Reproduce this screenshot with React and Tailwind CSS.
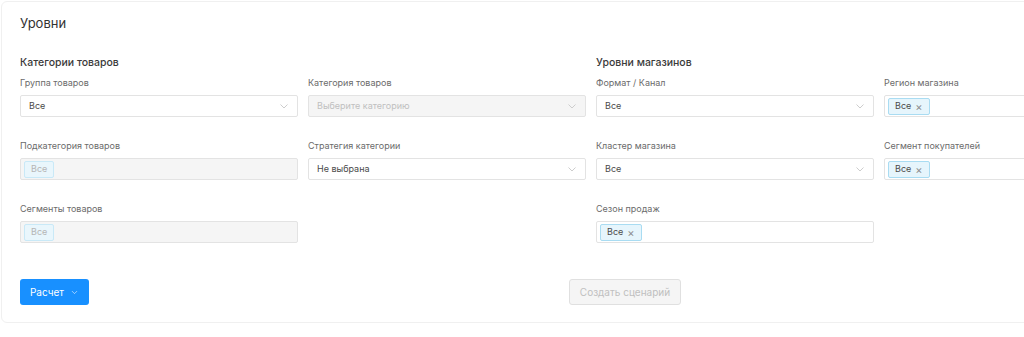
import { ChevronDown } from 'lucide-react'

const Chevron = ({ className = '' }) => (
  <svg width="8" height="5" viewBox="0 0 8 5" className={className} fill="none">
    <path d="M0.5 0.5 L4 4 L7.5 0.5" stroke="currentColor" strokeWidth="1" />
  </svg>
)

function Select({ value, placeholder, disabled }) {
  return (
    <div
      className={`h-[22px] flex items-center justify-between pl-[8px] pr-[9px] border rounded-[2px] ${
        disabled ? 'bg-[#f5f5f5] border-[#e3e3e3]' : 'bg-white border-[#e3e3e3]'
      }`}
    >
      <span className={`text-[9px] ${value ? 'text-[#4a4a4a]' : 'text-[#c0c0c0]'}`}>
        {value || placeholder}
      </span>
      <Chevron className="text-[#cdcdcd]" />
    </div>
  )
}

function Tags({ disabled }) {
  return (
    <div
      className={`h-[22px] flex items-center pl-[3px] border rounded-[2px] ${
        disabled ? 'bg-[#f5f5f5] border-[#e3e3e3]' : 'bg-white border-[#e3e3e3]'
      }`}
    >
      <span
        className={`h-[17px] flex items-center gap-[4px] px-[6px] rounded-[2px] border text-[9px] ${
          disabled
            ? 'bg-[#e9f6fc] border-[#c9e9f7] text-[#b5b5b5]'
            : 'bg-[#e6f5fc] border-[#a9dcf2] text-[#4a4a4a]'
        }`}
      >
        Все
        {!disabled && <span className="text-[#8c8c8c] text-[11px] leading-none mt-[2px]">×</span>}
      </span>
    </div>
  )
}

function Field({ label, children }) {
  return (
    <div className="flex flex-col">
      <div className="text-[9px] leading-[16px] text-[#6b6b6b] mb-[4px]">{label}</div>
      {children}
    </div>
  )
}

export default function App() {
  return (
    <div className="w-[1024px] h-[337px] overflow-hidden bg-white" style={{ fontFamily: 'Inter, "Noto Sans", sans-serif' }}>
      <div className="ml-[1px] mt-[1px] w-[1100px] h-[322px] border border-[#f0f0f0] rounded-[6px] bg-white pl-[18px] pt-[10px]">
        <h1 className="text-[13px] leading-[22px] text-[#333]">Уровни</h1>

        <div className="grid grid-cols-[278px_278px_278px_278px] gap-x-[10px] mt-[20px]">
          {/* Категории товаров */}
          <div className="col-span-2">
            <div className="text-[10.5px] leading-[18px] font-medium text-[#3a3a3a] mb-[3px]">Категории товаров</div>
            <div className="grid grid-cols-[278px_278px] gap-x-[10px] gap-y-[21px]">
              <Field label="Группа товаров">
                <Select value="Все" />
              </Field>
              <Field label="Категория товаров">
                <Select placeholder="Выберите категорию" disabled />
              </Field>
              <Field label="Подкатегория товаров">
                <Tags disabled />
              </Field>
              <Field label="Стратегия категории">
                <Select value="Не выбрана" />
              </Field>
              <Field label="Сегменты товаров">
                <Tags disabled />
              </Field>
            </div>
          </div>

          {/* Уровни магазинов */}
          <div className="col-span-2">
            <div className="text-[10.5px] leading-[18px] font-medium text-[#3a3a3a] mb-[3px]">Уровни магазинов</div>
            <div className="grid grid-cols-[278px_278px] gap-x-[10px] gap-y-[21px]">
              <Field label="Формат / Канал">
                <Select value="Все" />
              </Field>
              <Field label="Регион магазина">
                <Tags />
              </Field>
              <Field label="Кластер магазина">
                <Select value="Все" />
              </Field>
              <Field label="Сегмент покупателей">
                <Tags />
              </Field>
              <Field label="Сезон продаж">
                <Tags />
              </Field>
            </div>
          </div>
        </div>

        <div className="flex items-center mt-[36px]">
          <button className="h-[26px] w-[69px] flex items-center justify-center gap-[6px] rounded-[3px] bg-[#1890ff] text-white text-[10px]">
            Расчет
            <ChevronDown size={9} strokeWidth={1.5} />
          </button>
          <button className="ml-[480px] h-[26px] w-[112px] flex items-center justify-center rounded-[3px] border border-[#e0e0e0] bg-[#f5f5f5] text-[#c0c0c0] text-[10px]">
            Создать сценарий
          </button>
        </div>
      </div>
    </div>
  )
}
